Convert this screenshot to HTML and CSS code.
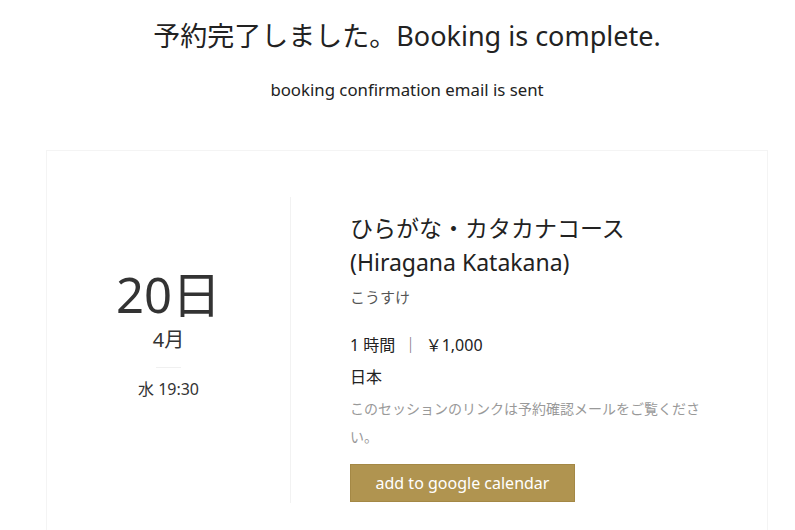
FILE: index.html
```html
<!DOCTYPE html>
<html lang="ja">
<head>
<meta charset="utf-8">
<link rel="stylesheet" href="styles.css">
</head>
<body>
<div class="page">
  <h1 class="title">予約完了しました。Booking is complete.</h1>
  <p class="subtitle">booking confirmation email is sent</p>
  <div class="card">
    <div class="date-col">
      <div class="day">20日</div>
      <div class="month">4月</div>
      <div class="rule"></div>
      <div class="time">水 19:30</div>
    </div>
    <div class="info-col">
      <h2 class="course">ひらがな・カタカナコース<br>(Hiragana Katakana)</h2>
      <div class="teacher">こうすけ</div>
      <div class="meta">1 時間 <span class="sep">｜</span> ￥1,000</div>
      <div class="country">日本</div>
      <p class="note">このセッションのリンクは予約確認メールをご覧ください。</p>
      <a class="btn">add to google calendar</a>
    </div>
  </div>
</div>
</body>
</html>
```
FILE: styles.css
```css
html, body {
  margin: 0;
  padding: 0;
  background: #fff;
}
body {
  font-family: "Noto Sans", "Noto Sans CJK JP", sans-serif;
  color: #222;
}
.page {
  padding: 0 27px 0 46px;
}
.title {
  margin: 0;
  padding-top: 16px;
  text-align: center;
  font-size: 27px;
  font-weight: normal;
  line-height: 40px;
  color: #222;
}
.subtitle {
  margin: 24px 0 0;
  text-align: center;
  font-size: 16.8px;
  line-height: 20px;
  color: #222;
}
.card {
  margin-top: 50px;
  border: 1px solid #f4f4f4;
  border-bottom: none;
  padding-top: 46px;
  display: grid;
  grid-template-columns: 244px 1fr;
  height: 400px;
  box-sizing: border-box;
}
.date-col {
  border-right: 1px solid #f2f2f2;
  height: 306px;
  display: flex;
  flex-direction: column;
  align-items: center;
  padding-top: 66px;
  box-sizing: border-box;
}
.day {
  font-size: 49px;
  line-height: 62px;
  color: #333;
}
.month {
  margin-top: 2px;
  font-size: 20px;
  line-height: 26px;
  color: #333;
}
.rule {
  width: 25px;
  height: 1px;
  background: #f0f0f0;
  margin: 14px 0 0;
}
.time {
  margin-top: 9px;
  font-size: 16px;
  line-height: 24px;
  color: #333;
}
.info-col {
  padding: 14px 0 0 59px;
}
.course {
  margin: 0;
  font-size: 23px;
  font-weight: normal;
  line-height: 34px;
  color: #222;
}
.teacher {
  margin-top: 6px;
  font-size: 15px;
  line-height: 24px;
  color: #555;
}
.meta {
  margin-top: 24px;
  font-size: 16px;
  line-height: 24px;
  color: #222;
}
.sep {
  color: #666;
  margin: 0 3px;
}
.country {
  margin-top: 8px;
  font-size: 16px;
  line-height: 24px;
  color: #222;
}
.note {
  margin: 6px 0 0;
  width: 362px;
  font-size: 14px;
  line-height: 28px;
  color: #999;
}
.btn {
  display: inline-block;
  margin-top: 13px;
  width: 225px;
  height: 38px;
  box-sizing: border-box;
  border: 1px solid #a48845;
  background: #b09450;
  color: #fff;
  font-size: 16px;
  line-height: 36px;
  text-align: center;
}
```
